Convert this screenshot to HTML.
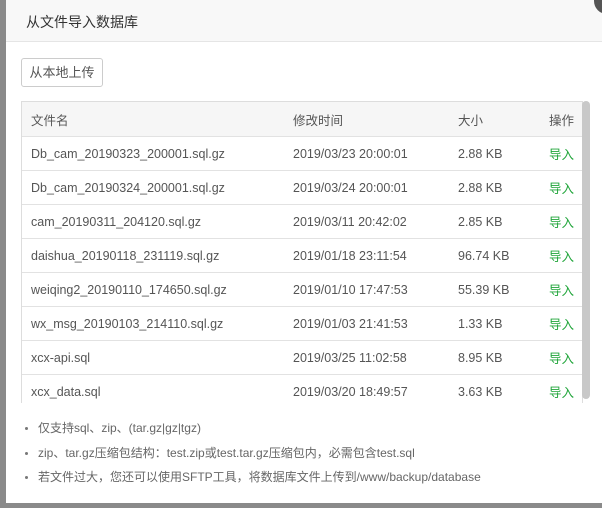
<!DOCTYPE html>
<html><head><meta charset="utf-8"><style>
body{margin:0;width:602px;height:508px;overflow:hidden;background:#8a8a8a;font-family:"Liberation Sans","Noto Sans CJK SC",sans-serif;position:relative}
.dlg{position:absolute;left:6px;top:0;width:596px;height:503px;background:#fff}
.hd{height:41px;background:#f8f8f8;border-bottom:1px solid #e5e5e5;font-size:14px;color:#333;line-height:44px;padding-left:20px}
.close{position:absolute;left:588px;top:-12px;width:26px;height:26px;border-radius:50%;background:#555}
.btn{position:absolute;left:15px;top:58px;width:80px;height:27px;border:1px solid #ccc;border-radius:3px;font-size:13px;color:#555;line-height:27px;text-align:center}
.tw{position:absolute;left:15px;top:101px;width:560px;height:301px;overflow:hidden;border:1px solid #ddd;border-bottom:none}
table{border-collapse:collapse;width:560px;font-size:12.5px;color:#555}
td,th{height:33px;border-bottom:1px solid #e2e2e2;padding:0;text-align:left;font-weight:normal}
th{background:#f6f6f6;height:34px}
td:first-child,th:first-child{padding-left:9px}
.g{color:#20a53a;text-align:right;padding-right:8px}
.sb{position:absolute;left:576px;top:101px;width:8px;height:298px;background:#c8c8c8;border-radius:4px}
ul{position:absolute;left:17px;top:416px;margin:0;padding:0;list-style:none;font-size:12px;color:#666}
li{height:24.5px;line-height:24px;padding-left:15px;position:relative}
li:before{content:"";position:absolute;left:2px;top:11px;width:3px;height:3px;border-radius:50%;background:#777}
</style></head><body>
<div class="dlg">
<div class="hd">从文件导入数据库</div>
<div class="btn">从本地上传</div>
<div class="tw"><table>
<tr><th style="width:262px">文件名</th><th style="width:165px">修改时间</th><th style="width:80px">大小</th><th class="g" style="color:#555">操作</th></tr>
<tr><td>Db_cam_20190323_200001.sql.gz</td><td>2019/03/23 20:00:01</td><td>2.88 KB</td><td class="g">导入</td></tr>
<tr><td>Db_cam_20190324_200001.sql.gz</td><td>2019/03/24 20:00:01</td><td>2.88 KB</td><td class="g">导入</td></tr>
<tr><td>cam_20190311_204120.sql.gz</td><td>2019/03/11 20:42:02</td><td>2.85 KB</td><td class="g">导入</td></tr>
<tr><td>daishua_20190118_231119.sql.gz</td><td>2019/01/18 23:11:54</td><td>96.74 KB</td><td class="g">导入</td></tr>
<tr><td>weiqing2_20190110_174650.sql.gz</td><td>2019/01/10 17:47:53</td><td>55.39 KB</td><td class="g">导入</td></tr>
<tr><td>wx_msg_20190103_214110.sql.gz</td><td>2019/01/03 21:41:53</td><td>1.33 KB</td><td class="g">导入</td></tr>
<tr><td>xcx-api.sql</td><td>2019/03/25 11:02:58</td><td>8.95 KB</td><td class="g">导入</td></tr>
<tr><td>xcx_data.sql</td><td>2019/03/20 18:49:57</td><td>3.63 KB</td><td class="g">导入</td></tr>
</table></div>
<div class="sb"></div>
<ul>
<li>仅支持sql、zip、(tar.gz|gz|tgz)</li>
<li>zip、tar.gz压缩包结构：test.zip或test.tar.gz压缩包内，必需包含test.sql</li>
<li>若文件过大，您还可以使用SFTP工具，将数据库文件上传到/www/backup/database</li>
</ul>
<div class="close"></div>
</div>
</body></html>
